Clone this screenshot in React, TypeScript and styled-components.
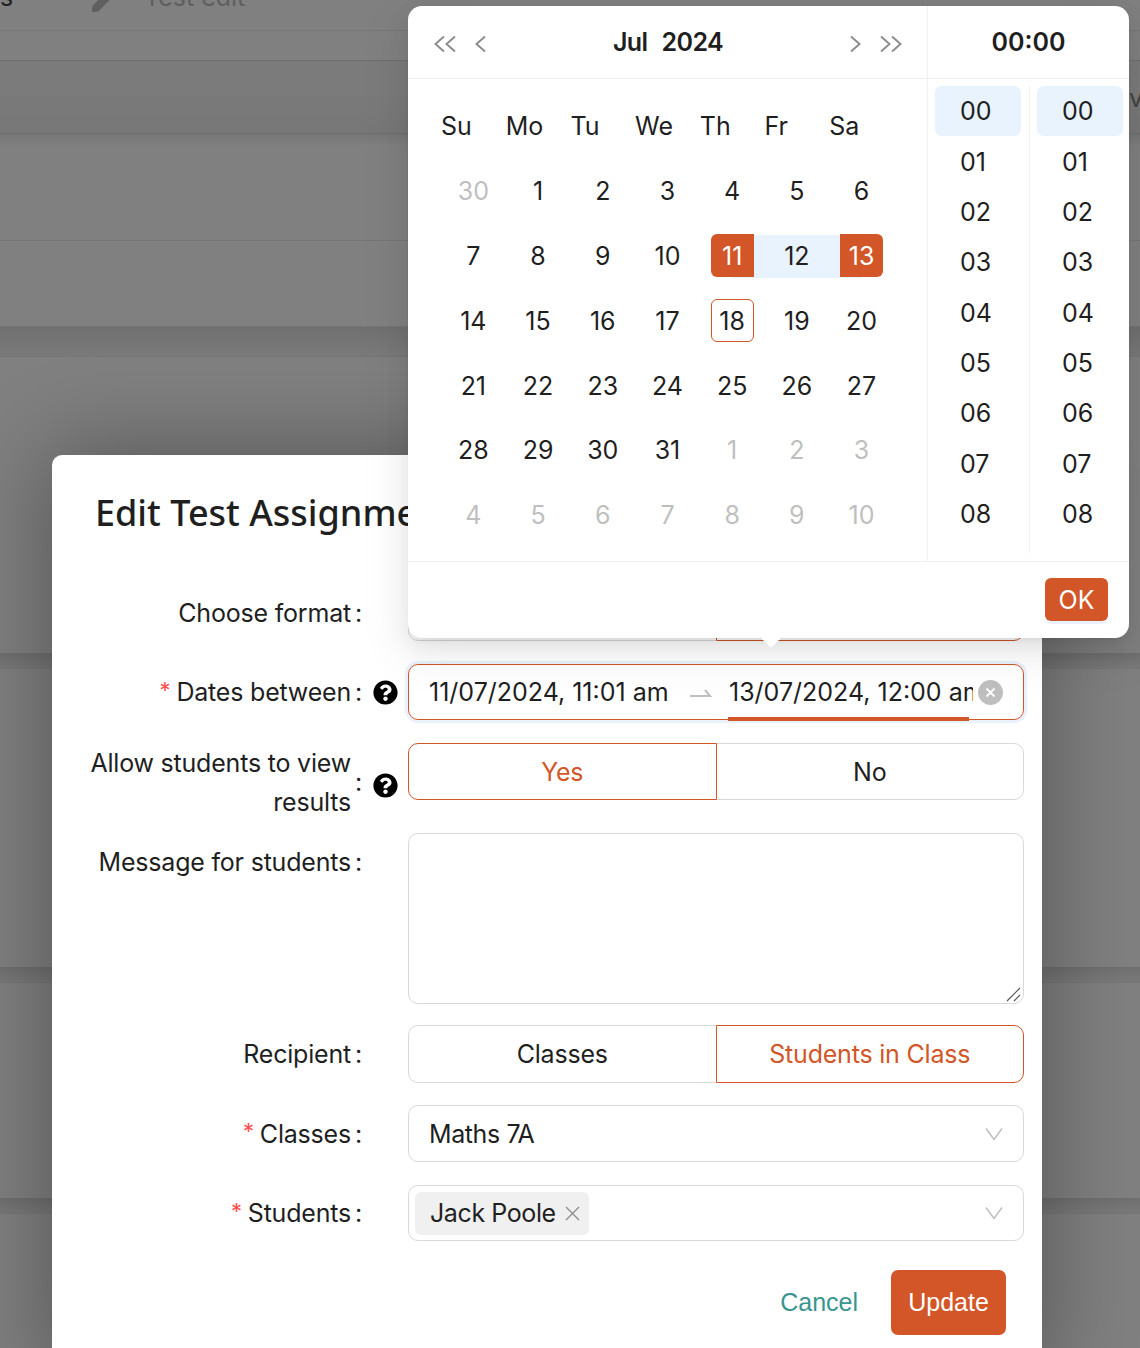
import React from 'react';
import styled, { createGlobalStyle, css } from 'styled-components';
import { FaPen, FaQuestionCircle } from 'react-icons/fa';

const ORANGE = '#d25627';
const TEXT = '#1f1f1f';
const DISABLED = '#bfbfbf';
const LINE = '#d9d9d9';
const SOFT = '#f0f0f0';
const RANGE = '#e8f3fd';

const GlobalStyle = createGlobalStyle`
  html, body {
    margin: 0;
    padding: 0;
    width: 1140px;
    height: 1348px;
    overflow: hidden;
    background: #808080;
  }
  * {
    box-sizing: border-box;
  }
`;

const Page = styled.div`
  position: relative;
  width: 1140px;
  height: 1348px;
  overflow: hidden;
  background: #808080;
  color: ${TEXT};
  font-family: Inter, 'Liberation Sans', sans-serif;
  font-size: 25px;
`;

/* dimmed table behind the modal */
const BackRow = styled.div<{ $h: number; $tone?: 'faint' | 'soft' | 'band' | 'fade'; $strong?: boolean }>`
  height: ${({ $h }) => $h}px;
  display: flex;
  border-bottom: 1px solid ${({ $strong }) => ($strong ? '#6e6e6e' : '#767676')};
  ${({ $tone }) => $tone === 'faint' && css`background: #7b7b7b;`}
  ${({ $tone }) => $tone === 'soft' && css`background: linear-gradient(#7a7a7a, #777777);`}
  ${({ $tone }) => $tone === 'band' && css`background: linear-gradient(#707070, #7a7a7a);`}
  ${({ $tone }) => $tone === 'fade' && css`background: linear-gradient(#767676, #808080 12px);`}
`;

const BackSpace = styled.div<{ $h: number }>`
  height: ${({ $h }) => $h}px;
`;

const BackCell = styled.div<{ $w: number; $dark?: boolean }>`
  width: ${({ $w }) => $w}px;
  flex: none;
  margin-top: -18px;
  height: 30px;
  line-height: 30px;
  color: ${({ $dark }) => ($dark ? '#222' : '#5f5f5f')};
  white-space: nowrap;
  svg {
    display: block;
    margin-top: 7px;
    margin-left: 2px;
    width: 23px;
    height: 23px;
  }
`;

const BackTail = styled.div`
  margin-left: auto;
  margin-top: 22px;
  width: 11px;
  height: 30px;
  overflow: hidden;
  color: #444;
  line-height: 30px;
`;

const Modal = styled.div`
  position: absolute;
  left: 52px;
  top: 455px;
  width: 990px;
  height: 920px;
  padding: 0 18px 0 44px;
  background: #fff;
  border-radius: 10px;
  box-shadow: 0 0 90px 6px rgba(0, 0, 0, 0.32);
`;

const Title = styled.h2`
  margin: 0 0 0 -1px;
  height: 129px;
  padding-top: 33px;
  font-family: 'Noto Sans', 'Open Sans', sans-serif;
  font-size: 36px;
  font-weight: 500;
  line-height: 50px;
  white-space: nowrap;
  color: ${TEXT};
`;

const FormRow = styled.div<{ $gap: number; $h: number }>`
  display: grid;
  grid-template-columns: 266px 46px 616px;
  grid-template-rows: ${({ $h }) => $h}px;
  margin-bottom: ${({ $gap }) => $gap}px;
`;

const Label = styled.label<{ $top?: boolean; $tall?: boolean }>`
  display: flex;
  justify-content: flex-end;
  align-items: center;
  height: ${({ $top, $tall }) => ($tall ? '78px' : $top ? '58px' : '100%')};
  padding-top: 1px;
  line-height: 39px;
  text-align: right;
  white-space: nowrap;
  letter-spacing: -0.2px;
`;

const Star = styled.span`
  color: #ff4d4f;
  font-size: 22px;
  line-height: 1;
  margin-right: 6px;
  margin-top: -6px;
`;

const Colon = styled.span`
  margin-left: 4px;
`;

const HelpSlot = styled.div<{ $tall?: boolean }>`
  display: flex;
  align-items: center;
  height: ${({ $tall }) => ($tall ? '84px' : '100%')};
  padding-left: 11px;
  color: #000;
  font-size: 25px;
  svg {
    display: block;
  }
`;

const Segments = styled.div`
  display: flex;
  letter-spacing: -0.2px;
`;

const Segment = styled.div<{ $active?: boolean; $side: 'left' | 'right' }>`
  position: relative;
  flex: 1 1 50%;
  display: flex;
  align-items: center;
  justify-content: center;
  border: 1px solid ${({ $active }) => ($active ? ORANGE : LINE)};
  color: ${({ $active }) => ($active ? ORANGE : TEXT)};
  z-index: ${({ $active }) => ($active ? 1 : 0)};
  ${({ $side }) =>
    $side === 'left'
      ? css`
          border-radius: 10px 0 0 10px;
        `
      : css`
          border-radius: 0 10px 10px 0;
          margin-left: -1px;
        `}
`;

const RangeBox = styled.div`
  position: relative;
  display: flex;
  align-items: center;
  padding-left: 20px;
  border: 1px solid ${ORANGE};
  border-radius: 10px;
  box-shadow: 0 0 0 3px #e9f2fb;
  white-space: nowrap;
`;

const RangeValue = styled.span<{ $w: number }>`
  width: ${({ $w }) => $w}px;
  flex: none;
  overflow: hidden;
`;

const RangeArrow = styled.svg`
  width: 22px;
  height: 12px;
  margin: 4px 17px 0 0;
  flex: none;
`;

const ActiveBar = styled.div`
  position: absolute;
  left: 319px;
  bottom: -2px;
  width: 241px;
  height: 4px;
  background: ${ORANGE};
`;

const ClearIcon = styled.svg`
  position: absolute;
  right: 20px;
  top: 15px;
  width: 25px;
  height: 25px;
`;

const MessageBox = styled.div`
  position: relative;
  border: 1px solid ${LINE};
  border-radius: 10px;
`;

const ResizeGrip = styled.svg`
  position: absolute;
  right: 2px;
  bottom: 1px;
  width: 15px;
  height: 15px;
`;

const SelectBox = styled.div<{ $tight?: boolean }>`
  display: flex;
  align-items: center;
  justify-content: space-between;
  padding: 0 20px 0 ${({ $tight }) => ($tight ? '6px' : '20px')};
  border: 1px solid ${LINE};
  border-radius: 10px;
  letter-spacing: -0.4px;
`;

const SelectArrow = styled.svg`
  width: 18px;
  height: 14px;
  flex: none;
`;

const Tag = styled.span`
  display: flex;
  align-items: center;
  gap: 9px;
  height: 43px;
  padding: 0 9px 0 15px;
  background: ${SOFT};
  border-radius: 6px;
  svg {
    width: 15px;
    height: 15px;
  }
`;

const Footer = styled.div`
  display: flex;
  justify-content: flex-end;
  align-items: center;
  gap: 33px;
  padding-right: 18px;
  font-family: 'Liberation Sans', Arial, sans-serif;
`;

const CancelLink = styled.span`
  color: #3a9490;
`;

const UpdateButton = styled.button`
  width: 115px;
  height: 65px;
  border: none;
  border-radius: 7px;
  background: ${ORANGE};
  color: #fff;
  font: inherit;
`;

const Picker = styled.div`
  position: absolute;
  z-index: 2;
  left: 408px;
  top: 6px;
  width: 721px;
  height: 632px;
  display: flex;
  flex-direction: column;
  background: #fff;
  border-radius: 14px;
  box-shadow: 0 14px 44px 12px rgba(0, 0, 0, 0.05), 0 9px 25px rgba(0, 0, 0, 0.08), 0 5px 9px -6px rgba(0, 0, 0, 0.12);
  &::after {
    content: '';
    position: absolute;
    left: 356px;
    bottom: -7px;
    width: 14px;
    height: 14px;
    background: #fff;
    border-radius: 2px;
    transform: rotate(45deg);
  }
`;

const PickerBody = styled.div`
  display: flex;
  height: 556px;
  border-bottom: 1px solid ${SOFT};
`;

const DatePanel = styled.div`
  width: 520px;
  flex: none;
  border-right: 1px solid ${SOFT};
`;

const PanelHeader = styled.div`
  position: relative;
  z-index: 1;
  height: 73px;
  display: flex;
  align-items: center;
  border-bottom: 1px solid ${SOFT};
  font-weight: 600;
  padding-bottom: 1px;
`;

const NavButtons = styled.div<{ $side: 'left' | 'right' }>`
  display: flex;
  align-items: center;
  gap: 19px;
  margin-top: 4px;
  padding-left: ${({ $side }) => ($side === 'left' ? '26px' : 0)};
  padding-right: ${({ $side }) => ($side === 'right' ? '25px' : 0)};
  svg {
    display: block;
    height: 18px;
  }
`;

const MonthTitle = styled.div`
  flex: 1;
  display: flex;
  justify-content: center;
  gap: 14px;
  letter-spacing: -0.6px;
`;

const TimeTitle = styled(PanelHeader)`
  justify-content: center;
`;

const Calendar = styled.div`
  display: grid;
  grid-template-columns: repeat(7, 64.71px);
  grid-auto-rows: 64.8px;
  padding: 15px 33px;
`;

const Weekday = styled.div`
  display: flex;
  align-items: center;
`;

type RangePart = 'start' | 'middle' | 'end';

const DayCell = styled.div<{ $range?: RangePart }>`
  position: relative;
  display: flex;
  align-items: center;
  justify-content: center;
  ${({ $range }) =>
    $range &&
    css`
      &::before {
        content: '';
        position: absolute;
        top: 11px;
        height: 43px;
        left: ${$range === 'start' ? '50%' : 0};
        right: ${$range === 'end' ? '50%' : 0};
        background: ${RANGE};
      }
    `}
`;

const DayChip = styled.span<{ $muted?: boolean; $picked?: 'start' | 'end'; $today?: boolean }>`
  position: relative;
  width: 43px;
  height: 43px;
  display: flex;
  align-items: center;
  justify-content: center;
  color: ${({ $muted }) => ($muted ? DISABLED : TEXT)};
  ${({ $today }) =>
    $today &&
    css`
      border: 1px solid ${ORANGE};
      border-radius: 6px;
    `}
  ${({ $picked }) =>
    $picked &&
    css`
      background: ${ORANGE};
      color: #fff;
      border-radius: ${$picked === 'start' ? '6px 0 0 6px' : '0 6px 6px 0'};
    `}
`;

const TimePanel = styled.div`
  flex: 1;
  min-width: 0;
`;

const TimeColumns = styled.div`
  display: flex;
  padding-top: 7px;
`;

const TimeColumn = styled.div<{ $first?: boolean }>`
  height: 467px;
  overflow: hidden;
  padding-left: 7px;
  flex: 0 0 ${({ $first }) => ($first ? '102px' : '99px')};
  ${({ $first }) =>
    $first &&
    css`
      border-right: 1px solid ${SOFT};
    `}
`;

const TimeCell = styled.div<{ $selected?: boolean }>`
  width: 86px;
  height: 50.35px;
  display: flex;
  align-items: center;
  padding-left: 25px;
  border-radius: 7px;
  background: ${({ $selected }) => ($selected ? RANGE : 'transparent')};
`;

const PickerFooter = styled.div`
  display: flex;
  justify-content: flex-end;
  padding: 16px 21px 0 0;
`;

const OkButton = styled.button`
  width: 63px;
  height: 43px;
  border: none;
  border-radius: 6px;
  background: ${ORANGE};
  color: #fff;
  font: inherit;
  box-shadow: 0 3px 0 #e9f2fb;
`;

const WEEKDAYS = ['Su', 'Mo', 'Tu', 'We', 'Th', 'Fr', 'Sa'];

const DAYS: { day: number; muted?: boolean }[] = [
  { day: 30, muted: true },
  ...Array.from({ length: 31 }, (_, i) => ({ day: i + 1 })),
  ...Array.from({ length: 10 }, (_, i) => ({ day: i + 1, muted: true })),
];

const HOURS = ['00', '01', '02', '03', '04', '05', '06', '07', '08', '09'];

const rangePart = (day: number, muted?: boolean): RangePart | undefined => {
  if (muted) return undefined;
  if (day === 11) return 'start';
  if (day === 12) return 'middle';
  if (day === 13) return 'end';
  return undefined;
};

const Chevron = ({ dir, double }: { dir: 'left' | 'right'; double?: boolean }) => {
  const flip = dir === 'right' ? 'matrix(-1 0 0 1 ' + (double ? 22 : 11) + ' 0)' : undefined;
  return (
    <svg viewBox={double ? '0 0 22 18' : '0 0 11 18'} width={double ? 22 : 11} fill="none" stroke="#8c8c8c" strokeWidth="1.9">
      <g transform={flip}>
        <path d="M10 1.5 1.5 9l8.500 7.500" />
        {double && <path d="M21 1.500 12.500 9l8.500 7.500" />}
      </g>
    </svg>
  );
};

const DownArrow = () => (
  <SelectArrow viewBox="0 0 18 14" fill="none" stroke="#bfbfbf" strokeWidth="1.500">
    <path d="M1 1.500 9 12.500 17 1.500" />
  </SelectArrow>
);

const App: React.FC = () => {
  return (
    <Page>
      <GlobalStyle />

      <BackRow $h={31}>
        <BackCell $w={90} $dark>s</BackCell>
        <BackCell $w={54}><FaPen /></BackCell>
        <BackCell $w={200}>Test edit</BackCell>
      </BackRow>
      <BackRow $h={30} $strong />
      <BackRow $h={37} $tone="faint">
        <BackTail>ve</BackTail>
      </BackRow>
      <BackRow $h={36} $tone="soft" $strong />
      <BackRow $h={107} $tone="fade" />
      <BackRow $h={86} />
      <BackRow $h={30} $tone="band" />
      <BackSpace $h={296} />
      <BackRow $h={16} $tone="band" />
      <BackSpace $h={298} />
      <BackRow $h={16} $tone="band" />
      <BackSpace $h={215} />
      <BackRow $h={16} $tone="band" />

      <Modal>
        <Title>Edit Test Assignment</Title>

        <FormRow $h={57} $gap={23}>
          <Label>Choose format<Colon>:</Colon></Label>
          <span />
          <Segments>
            <Segment $side="left">Online</Segment>
            <Segment $side="right" $active>Paper</Segment>
          </Segments>
        </FormRow>

        <FormRow $h={56} $gap={23}>
          <Label><Star>*</Star>Dates between<Colon>:</Colon></Label>
          <HelpSlot><FaQuestionCircle /></HelpSlot>
          <RangeBox>
            <RangeValue $w={261}>11/07/2024, 11:01 am</RangeValue>
            <RangeArrow viewBox="0 0 22 12" fill="none" stroke="#bfbfbf" strokeWidth="2">
              <path d="M0 8H20L15 2" />
            </RangeArrow>
            <RangeValue $w={244}>13/07/2024, 12:00 am</RangeValue>
            <ActiveBar />
            <ClearIcon viewBox="0 0 25 25">
              <circle cx="12.500" cy="12.500" r="12.500" fill="#bfbfbf" />
              <path d="M8.500 8.500l8 8M16.500 8.500l-8 8" stroke="#fff" strokeWidth="1.800" />
            </ClearIcon>
          </RangeBox>
        </FormRow>

        <FormRow $h={57} $gap={33}>
          <Label $tall>
            <span>Allow students to view<br />results</span>
            <Colon>:</Colon>
          </Label>
          <HelpSlot $tall><FaQuestionCircle /></HelpSlot>
          <Segments>
            <Segment $side="left" $active>Yes</Segment>
            <Segment $side="right">No</Segment>
          </Segments>
        </FormRow>

        <FormRow $h={171} $gap={21}>
          <Label $top>Message for students<Colon>:</Colon></Label>
          <span />
          <MessageBox>
            <ResizeGrip viewBox="0 0 15 15" fill="none" stroke="#555" strokeWidth="1.200">
              <path d="M1 14 14 1M8 14l6-6" />
            </ResizeGrip>
          </MessageBox>
        </FormRow>

        <FormRow $h={58} $gap={22}>
          <Label>Recipient<Colon>:</Colon></Label>
          <span />
          <Segments>
            <Segment $side="left">Classes</Segment>
            <Segment $side="right" $active>Students in Class</Segment>
          </Segments>
        </FormRow>

        <FormRow $h={57} $gap={23}>
          <Label><Star>*</Star>Classes<Colon>:</Colon></Label>
          <span />
          <SelectBox>
            Maths 7A
            <DownArrow />
          </SelectBox>
        </FormRow>

        <FormRow $h={56} $gap={29}>
          <Label><Star>*</Star>Students<Colon>:</Colon></Label>
          <span />
          <SelectBox $tight>
            <Tag>
              Jack Poole
              <svg viewBox="0 0 15 15" fill="none" stroke="#8c8c8c" strokeWidth="1.300">
                <path d="M1 1l13 13M14 1 1 14" />
              </svg>
            </Tag>
            <DownArrow />
          </SelectBox>
        </FormRow>

        <Footer>
          <CancelLink>Cancel</CancelLink>
          <UpdateButton>Update</UpdateButton>
        </Footer>
      </Modal>

      <Picker>
        <PickerBody>
          <DatePanel>
            <PanelHeader>
              <NavButtons $side="left">
                <Chevron dir="left" double />
                <Chevron dir="left" />
              </NavButtons>
              <MonthTitle>
                <span>Jul</span>
                <span>2024</span>
              </MonthTitle>
              <NavButtons $side="right">
                <Chevron dir="right" />
                <Chevron dir="right" double />
              </NavButtons>
            </PanelHeader>
            <Calendar>
              {WEEKDAYS.map((w) => (
                <Weekday key={w}>{w}</Weekday>
              ))}
              {DAYS.map(({ day, muted }, i) => (
                <DayCell key={i} $range={rangePart(day, muted)}>
                  <DayChip
                    $muted={muted}
                    $today={!muted && day === 18}
                    $picked={!muted && day === 11 ? 'start' : !muted && day === 13 ? 'end' : undefined}
                  >
                    {day}
                  </DayChip>
                </DayCell>
              ))}
            </Calendar>
          </DatePanel>
          <TimePanel>
            <TimeTitle>00:00</TimeTitle>
            <TimeColumns>
              <TimeColumn $first>
                {HOURS.map((h) => (
                  <TimeCell key={h} $selected={h === '00'}>{h}</TimeCell>
                ))}
              </TimeColumn>
              <TimeColumn>
                {HOURS.map((h) => (
                  <TimeCell key={h} $selected={h === '00'}>{h}</TimeCell>
                ))}
              </TimeColumn>
            </TimeColumns>
          </TimePanel>
        </PickerBody>
        <PickerFooter>
          <OkButton>OK</OkButton>
        </PickerFooter>
      </Picker>
    </Page>
  );
};

export default App;
